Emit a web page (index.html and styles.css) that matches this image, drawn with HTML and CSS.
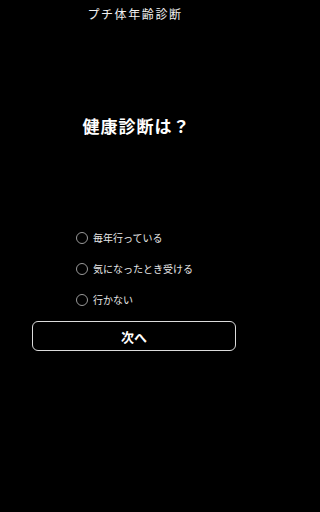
FILE: index.html
```html
<!DOCTYPE html>
<html lang="ja">
<head>
<meta charset="utf-8">
<meta name="viewport" content="width=272">
<link rel="stylesheet" href="styles.css">
</head>
<body>
<div class="app">
  <div class="title">プチ体年齢診断</div>
  <div class="question">健康診断は？</div>
  <div class="options">
    <label class="option"><span class="radio"></span><span class="label">毎年行っている</span></label>
    <label class="option"><span class="radio"></span><span class="label">気になったとき受ける</span></label>
    <label class="option"><span class="radio"></span><span class="label">行かない</span></label>
  </div>
  <button class="next">次へ</button>
</div>
</body>
</html>
```
FILE: styles.css
```css
html, body {
  margin: 0;
  padding: 0;
  background: #000;
  height: 100%;
}
body {
  font-family: "Noto Sans CJK JP", "Noto Sans", sans-serif;
  color: #fff;
}
.app {
  width: 268px;
  display: flex;
  flex-direction: column;
  align-items: center;
  padding-top: 6px;
}
.title {
  font-size: 12px;
  line-height: 16px;
  letter-spacing: 1.6px;
  color: #f2f2f2;
  margin-left: 2px;
}
.question {
  margin-top: 92px;
  font-size: 17px;
  line-height: 24px;
  font-weight: bold;
  letter-spacing: 1px;
  margin-left: 5px;
}
.options {
  margin-top: 84px;
  width: 204px;
  padding-left: 44px;
  box-sizing: border-box;
  display: flex;
  flex-direction: column;
}
.option {
  height: 31px;
  display: flex;
  align-items: center;
  gap: 5px;
}
.radio {
  width: 12px;
  height: 12px;
  border: 1.5px solid #9a9a9a;
  border-radius: 50%;
  box-sizing: border-box;
  flex: none;
}
.label {
  font-size: 10px;
  color: #e8e8e8;
}
.next {
  margin-top: 6px;
  width: 204px;
  height: 30px;
  background: #000;
  border: 1.5px solid #dcdcdc;
  border-radius: 6px;
  color: #fff;
  font-family: inherit;
  font-size: 13px;
  font-weight: bold;
  padding: 0;
}
```
